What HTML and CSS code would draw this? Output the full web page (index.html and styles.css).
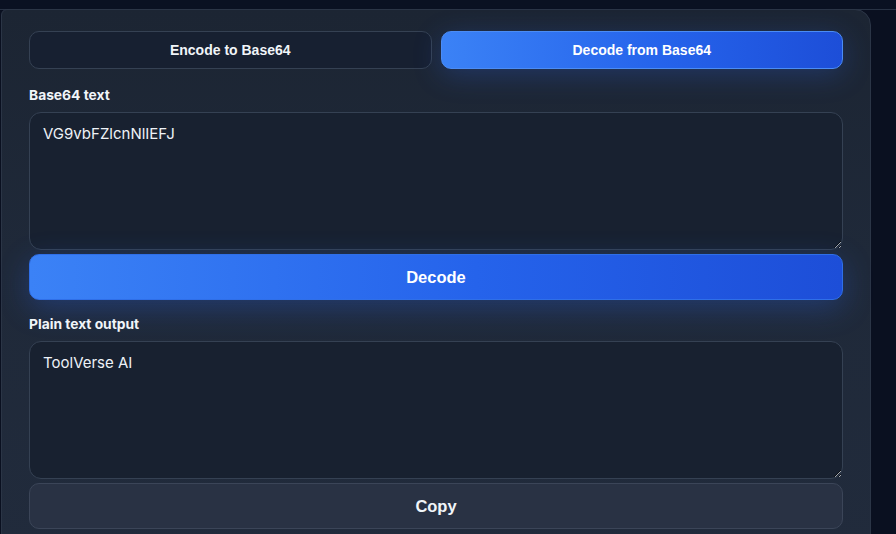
FILE: index.html
```html
<!DOCTYPE html>
<html lang="en">
<head>
<meta charset="utf-8">
<title>Base64 Encoder / Decoder</title>
<link rel="stylesheet" href="styles.css">
</head>
<body>
<div class="topbar"></div>
<main class="page">
  <section class="card">
    <div class="tabs">
      <button class="tab">Encode to Base64</button>
      <button class="tab tab-active">Decode from Base64</button>
    </div>
    <label class="field-label" for="input">Base64 text</label>
    <textarea id="input" class="field">VG9vbFZlcnNlIEFJ</textarea>
    <button class="btn btn-primary">Decode</button>
    <label class="field-label field-label-gap" for="output">Plain text output</label>
    <textarea id="output" class="field" readonly>ToolVerse AI</textarea>
    <button class="btn btn-secondary">Copy</button>
  </section>
</main>
</body>
</html>
```

FILE: styles.css
```css
* { box-sizing: border-box; }

html, body {
  margin: 0;
  height: 100%;
  background: #0a1020;
  overflow: hidden;
}

body {
  font-family: "Inter", "Liberation Sans", sans-serif;
  color: #e5e9f0;
}

.topbar {
  height: 10px;
  border-bottom: 1px solid #283244;
  background: #0a1122;
}

.page {
  padding-left: 1px;
  margin-top: -1px;
}

.card {
  width: 870px;
  padding: 21px 27px 30px 27px;
  background: linear-gradient(180deg, #1c2533 0%, #1f2939 45%, #212b3c 100%);
  border: 1px solid #2b3546;
  border-radius: 6px 16px 16px 16px;
  display: flex;
  flex-direction: column;
}

.tabs {
  display: grid;
  grid-template-columns: 1fr 1fr;
  gap: 9px;
  margin-bottom: 16px;
}

.tab {
  height: 38px;
  font-family: "Liberation Sans", Arial, sans-serif;
  font-weight: 700;
  font-size: 14px;
  color: #f1f5f9;
  background: #172031;
  border: 1px solid #354153;
  border-radius: 10px;
}

.tab-active {
  background: linear-gradient(90deg, #3b82f6 0%, #2563eb 55%, #1d4ed8 100%);
  border-color: #4b8cf5;
  color: #ffffff;
  box-shadow: 0 6px 28px rgba(45, 100, 230, 0.28);
}

.field-label {
  display: block;
  font-size: 13.8px;
  font-weight: 700;
  line-height: 20px;
  color: #f1f5f9;
  margin-bottom: 7px;
}

.field-label-gap {
  margin-top: 14px;
}

.field {
  display: block;
  width: 100%;
  height: 138px;
  padding: 10px 13px;
  font-family: "Inter", "Liberation Sans", sans-serif;
  font-size: 15px;
  line-height: 1.5;
  color: #eef2f7;
  background: #182130;
  border: 1px solid #354153;
  border-radius: 12px;
  resize: vertical;
  outline: none;
}

.btn {
  margin-top: 4px;
  height: 46px;
  width: 100%;
  font-family: "Liberation Sans", Arial, sans-serif;
  font-weight: 700;
  font-size: 16.5px;
  color: #ffffff;
  border-radius: 10px;
}

.btn-primary {
  background: linear-gradient(90deg, #3b82f6 0%, #2563eb 55%, #1d4ed8 100%);
  border: 1px solid #2f6fe8;
  box-shadow: 0 8px 30px rgba(45, 100, 230, 0.32);
}

.btn-secondary {
  background: #293244;
  border: 1px solid #3b4558;
  color: #f1f5f9;
}
```
